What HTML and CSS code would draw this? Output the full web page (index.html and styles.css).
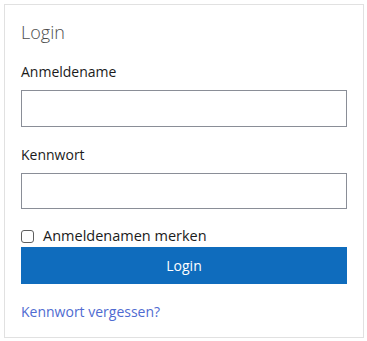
FILE: index.html
```html
<!DOCTYPE html>
<html lang="de">
<head>
<meta charset="utf-8">
<link rel="stylesheet" href="styles.css">
</head>
<body>
<div class="card">
  <h1 class="title">Login</h1>
  <label class="field-label" for="user">Anmeldename</label>
  <input class="field" id="user" type="text">
  <label class="field-label" for="pass">Kennwort</label>
  <input class="field" id="pass" type="password">
  <label class="remember"><span class="box"></span><span>Anmeldenamen merken</span></label>
  <button class="btn" type="button">Login</button>
  <a class="link" href="#">Kennwort vergessen?</a>
</div>
</body>
</html>
```
FILE: styles.css
```css
* { box-sizing: border-box; }
html, body { margin: 0; padding: 0; background: #fff; }
body { padding: 4px; font-family: "Open Sans", "Noto Sans", sans-serif; color: #1b1b1b; }
.card {
  width: 360px;
  height: 334px;
  border: 1px solid #e1e1e1;
  padding: 15px 15px 15px 16px;
  display: flex;
  flex-direction: column;
}
.title {
  margin: 0;
  font-size: 18px;
  line-height: 24px;
  font-weight: 300;
  color: #4d4d4d;
}
.field-label {
  display: block;
  margin-top: 18px;
  font-size: 14px;
  line-height: 20px;
}
.field {
  display: block;
  margin: 8px 0 0;
  width: 326px;
  height: 37px;
  border: 1px solid #8a8e97;
  border-radius: 0;
  padding: 0 8px;
  font: inherit;
  outline: none;
}
.remember {
  display: flex;
  align-items: center;
  gap: 9px;
  margin-top: 17px;
  font-size: 14.5px;
  line-height: 20px;
}
.box {
  width: 13px;
  height: 13px;
  border: 1px solid #5f5f5f;
  border-radius: 3px;
  flex: none;
}
.btn {
  margin-top: 1px;
  width: 326px;
  height: 37px;
  border: none;
  background: #0f6cbd;
  color: #fff;
  font: inherit;
  font-size: 14px;
  padding: 0;
}
.link {
  margin-top: 18px;
  font-size: 14px;
  line-height: 20px;
  color: #4f6bd1;
  text-decoration: none;
}
```
